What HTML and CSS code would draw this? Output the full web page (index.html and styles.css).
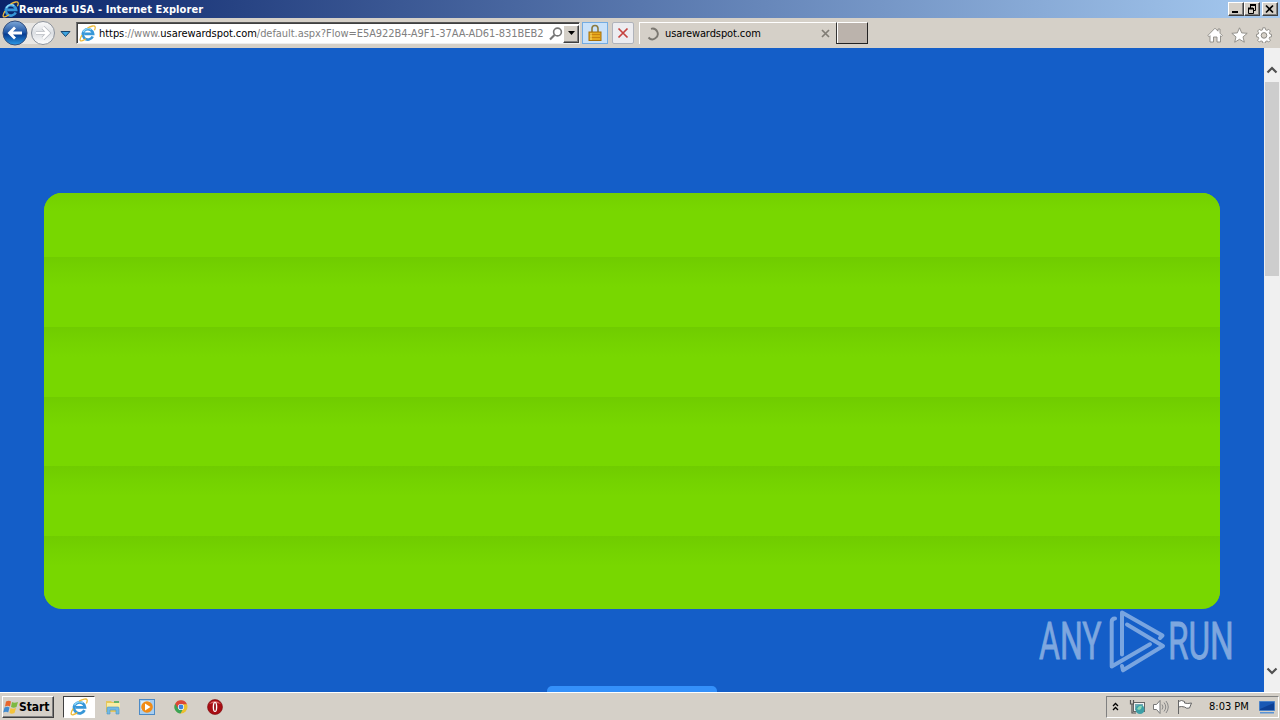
FILE: index.html
```html
<!DOCTYPE html>
<html lang="en">
<head>
    <meta charset="UTF-8">
    <title>Rewards USA</title>
    <link rel="stylesheet" href="styles.css">
</head>
<body>
    <svg class="defs" width="0" height="0">
        <defs>
            <linearGradient id="blue" x1="0" y1="0" x2="0" y2="1">
                <stop offset="0" stop-color="#7fa9d8"/>
                <stop offset=".48" stop-color="#1d54a4"/>
                <stop offset=".55" stop-color="#073c91"/>
                <stop offset="1" stop-color="#2b9be8"/>
            </linearGradient>
            <linearGradient id="grey" x1="0" y1="0" x2="0" y2="1">
                <stop offset="0" stop-color="#fbfbfb"/>
                <stop offset=".5" stop-color="#dcdfe3"/>
                <stop offset="1" stop-color="#ffffff"/>
            </linearGradient>
            <symbol id="ie" viewBox="0 0 16 16">
                <path d="M12.900 10.800A4.900 4.900 0 1 1 13.300 8.300H5" fill="none" stroke="#3797d8" stroke-width="2.500"/>
                <path d="M4 6.500A5 5 0 0 1 11.500 4.400" fill="none" stroke="#8cd7f8" stroke-width="1.300"/>
                <path d="M2.800 9.500C.6 13 .4 15.300 2.600 14.900C4 14.600 5.500 13.700 6.500 13M8 2.800C11.500.8 14.800.2 15.200 1.700C15.400 2.700 15 4 14.500 4.900" fill="none" stroke="#edbb3c" stroke-width="1.200"/>
            </symbol>
        </defs>
    </svg>

    <div class="titlebar">
        <svg class="title-icon" width="17" height="17"><use href="#ie"/></svg>
        <span class="title">Rewards USA - Internet Explorer</span>
        <div class="window-buttons">
            <span class="win-btn"><svg width="14" height="12"><path d="M3 9h6" stroke="#000" stroke-width="2"/></svg></span>
            <span class="win-btn"><svg width="14" height="12"><path d="M5 2h6M3 5.500h5" stroke="#000" stroke-width="2"/><path d="M5.500 2v3M10.500 2v5.500H8M3.500 5v5.500h5V5" fill="none" stroke="#000"/></svg></span>
            <span class="win-btn close"><svg width="14" height="12"><path d="M3 2.500l7 7M10 2.500l-7 7" stroke="#000" stroke-width="1.700"/></svg></span>
        </div>
    </div>

    <div class="toolbar">
        <svg class="nav" width="76" height="30" viewBox="0 0 76 30">
            <path d="M15 5h28v21H15z" fill="#e9e7e4"/>
            <circle cx="15" cy="15" r="12" fill="url(#blue)" stroke="#344f7d"/>
            <path d="M22 15H10M15 9.500L9.500 15l5.500 5.500" fill="none" stroke="#fff" stroke-width="2.800"/>
            <circle cx="43" cy="15" r="11.500" fill="url(#grey)" stroke="#8c929b"/>
            <path d="M36 15h12M43 9.500l5.500 5.500-5.500 5.500" fill="none" stroke="#b5b9bf" stroke-width="4"/>
            <path d="M36 15h12M43 9.500l5.500 5.500-5.500 5.500" fill="none" stroke="#fff" stroke-width="2.600"/>
            <path d="M61 13.500h9L65.500 18.500z" fill="#3da4df" stroke="#17456d"/>
        </svg>
        <div class="address">
            <svg class="page-icon" width="17" height="17"><use href="#ie"/></svg>
            <span class="url"><b>https</b>://www.<b>usarewardspot.com</b>/default.aspx?Flow=E5A922B4-A9F1-37AA-AD61-831BEB2</span>
            <svg class="search" width="14" height="14"><circle cx="8.500" cy="5" r="3.900" fill="none" stroke="#777" stroke-width="1.600"/><path d="M5.500 8L1 12.500" stroke="#777" stroke-width="2.200"/></svg>
            <span class="drop"><svg width="9" height="5"><path d="M1 0h7L4.500 4z"/></svg></span>
        </div>
        <div class="lock">
            <svg width="14" height="18"><path d="M4 9V4.500a3 3 0 0 1 6 0V9" fill="none" stroke="#8b7a3e" stroke-width="1.600"/><rect x="1" y="8" width="12" height="8.500" fill="#e5a81c" stroke="#a66f09"/><path d="M2 10.500h10M2 13.500h10" stroke="#c98310"/><path d="M3 9v7" stroke="#f9df71"/></svg>
        </div>
        <div class="stop">
            <svg width="12" height="12"><path d="M1.500 1.500l9 9M10.500 1.500l-9 9" stroke="#c5423f" stroke-width="1.700"/></svg>
        </div>
        <div class="tab">
            <svg width="14" height="14"><path d="M5 1.800A5.300 5.300 0 1 1 2.500 10.500" fill="none" stroke="#7b7871" stroke-width="1.900"/></svg>
            <span class="tab-name">usarewardspot.com</span>
            <svg class="tab-close" width="9" height="9"><path d="M1 1l7 7M8 1L1 8" stroke="#817d75" stroke-width="1.700"/></svg>
        </div>
        <div class="new-tab"></div>
        <div class="tools">
            <svg width="16" height="16"><path d="M.8 8.500L8 1.200l3 3V2h2v4.200l2.300 2.300-1 1-.8-.8V15H10v-5H6.500v5H3V8.700l-.9.900z" fill="#fff" stroke="#8b8983" stroke-width=".9"/></svg>
            <svg width="17" height="16"><path d="M8.500.8l2.200 5.100 5.500.4-4.200 3.600 1.300 5.300-4.800-2.900-4.800 2.900L5 9.900.8 6.300l5.500-.4z" fill="#fff" stroke="#8b8983" stroke-width=".9"/></svg>
            <svg width="16" height="16"><path d="M6.800.8h2.400l.4 2 1.400.6 1.700-1.100 1.700 1.700-1.100 1.700.6 1.400 1.600.3v2.400l-1.800.3-.5 1.400 1.200 1.800-1.700 1.700-1.700-1.100-1.400.6-.4 1.600H6.800l-.3-1.700-1.500-.5-1.700 1.100L1.600 13.300l1.100-1.800-.5-1.400-1.700-.3V7.400l1.700-.3.500-1.400L1.600 4l1.700-1.700L5 3.400l1.500-.6z" fill="#fff" stroke="#8b8983" stroke-width=".9"/><circle cx="8" cy="8.400" r="2.800" fill="#d6d1c8" stroke="#8b8983"/></svg>
        </div>
    </div>

    <div class="viewport">
        <div class="page">
            <div class="panel">
                <div class="row"></div>
                <div class="row"></div>
                <div class="row"></div>
                <div class="row"></div>
                <div class="row"></div>
                <div class="row"></div>
            </div>
            <div class="next-button"></div>
            <svg class="watermark" width="200" height="66" viewBox="0 0 200 66">
                <text transform="translate(3 50) scale(.617 1)">ANY</text>
                <g fill="none" stroke-width="4" stroke-linejoin="round" stroke-linecap="round">
                    <path d="M79 9.500q-3.300 0-3.300 3.500v44.500l38.300-22.200"/>
                    <path d="M86 45.500V3.500l40.500 23-2.500 2.500"/>
                    <path d="M91 15.500L127 37 87 61.300l-1-4.300"/>
                </g>
                <text transform="translate(132 50) scale(.64 1)">RUN</text>
            </svg>
        </div>
        <div class="scrollbar">
            <svg width="16" height="34"><path d="M3.500 24.500L8 20l4.500 4.500" fill="none" stroke="#505050" stroke-width="2.200"/></svg>
            <div class="thumb"></div>
            <svg class="down" width="16" height="34"><path d="M3.500 10.500L8 15 12.500 10.500" fill="none" stroke="#505050" stroke-width="2.200"/></svg>
        </div>
    </div>

    <div class="taskbar">
        <div class="start">
            <svg width="16" height="16"><path d="M3 2.500q3-1.500 5 0L7 7.500q-2-1.500-5 0z" fill="#e7652c"/><path d="M9 3q2 1.500 6 0l-1.500 5q-3 1.500-5.500 0z" fill="#7db942"/><path d="M1.500 8.500q3-1.500 5 0l-1.300 5q-2-1.500-5 0z" fill="#418bd0"/><path d="M7.500 9q2 1.500 5.500 0l-1.500 5q-3 1.500-5 0z" fill="#f4c33a"/></svg>
            <span>Start</span>
        </div>
        <div class="task active"><svg width="18" height="18"><use href="#ie"/></svg></div>
        <div class="task">
            <svg width="17" height="16"><path d="M1 2h5l1 1h7v10H1z" fill="#e5c65b"/><path d="M2 4h13v6H2z" fill="#f9eda4"/><path d="M9 2h5v2H9z" fill="#64b36a"/><path d="M2 15V9q0-1 1-1h10q1 0 1 1v6h-3v-4H5v4z" fill="#72b9e4" stroke="#4a94c5" stroke-width=".6"/></svg>
        </div>
        <div class="task">
            <svg width="16" height="16"><rect x=".5" y=".5" width="15" height="15" fill="#a8cef0" stroke="#4c8ac6"/><rect x="2" y="2" width="9" height="9" fill="#d8ebfa"/><circle cx="8" cy="8" r="5.800" fill="#f18b16"/><path d="M6 4.500L11.500 8 6 11.500z" fill="#fff"/></svg>
        </div>
        <div class="task">
            <svg width="14" height="14"><circle cx="7" cy="7" r="6.500" fill="#ecc02f"/><path d="M7 7L1.200 3.700A6.500 6.500 0 0 0 6.500 13.500l3-5.200z" fill="#3aa357"/><path d="M1.200 3.700A6.500 6.500 0 0 1 12.900 4.300H7L4.500 9z" fill="#dc4738"/><circle cx="7" cy="7" r="3.100" fill="#fff"/><circle cx="7" cy="7" r="2.400" fill="#3e83dc"/></svg>
        </div>
        <div class="task">
            <svg width="16" height="16"><circle cx="8" cy="8" r="7.500" fill="#a80d13" stroke="#7b0b0f" stroke-width=".6"/><path d="M2 5q6-6 12 0-6-2-12 0" fill="#db6a6b"/><ellipse cx="8" cy="8" rx="2.300" ry="5" fill="#fff"/><ellipse cx="8" cy="8" rx=".9" ry="4" fill="#8f0a10"/></svg>
        </div>
        <div class="tray">
            <svg class="chevrons" width="7" height="9"><path d="M1 4l2.500-2.500L6 4M1 8l2.500-2.500L6 8" fill="none" stroke="#000" stroke-width="1.300"/></svg>
            <svg class="network" width="17" height="16"><rect x="4.500" y="3.500" width="11" height="9" fill="#f4f4f4" stroke="#666"/><path d="M6 5h8v6H6z" fill="#73aab3"/><path d="M1.500 1v4h3V1M3 5v9h4" fill="none" stroke="#555" stroke-width="1.200"/><circle cx="11" cy="10.500" r="4.500" fill="#3d9fa6"/><path d="M8 10q2-4 5-3l-1 3-2 1z" fill="#8dd7b3"/></svg>
            <svg class="sound" width="17" height="16"><path d="M1.500 5.500h3l3.500-4v13l-3.500-4h-3z" fill="#fff" stroke="#777"/><path d="M10 5.500q2 2.500 0 5M12 3.500q3.500 4.500 0 9M14 2q4.500 6 0 12" fill="none" stroke="#888"/></svg>
            <svg class="flag" width="17" height="16"><path d="M2.500 1v14M2.500 2.500q3-2 6 0v1.500q3 1 7 0l-2 5q-3 1-5-1-3-1-6 0" fill="#fff" stroke="#666"/></svg>
            <span class="clock">8:03 PM</span>
            <svg class="desktop" width="16" height="14"><path d="M.5 1.500h15v9H.5z" fill="#1958b4" stroke="#4a81c7"/><path d="M1 9l14-6v7H1z" fill="#0d4095"/><path d="M1 12h14v1.500H1z" fill="#5993d5"/></svg>
        </div>
    </div>
</body>
</html>
```

FILE: styles.css
```css
* {
    box-sizing: border-box;
}

body {
    margin: 0;
    width: 1280px;
    height: 720px;
    display: flex;
    flex-direction: column;
    overflow: hidden;
    background: #d5d0c8;
    color: #000;
    font-family: "DejaVu Sans Condensed", "DejaVu Sans", sans-serif;
    font-size: 11px;
}

svg {
    display: block;
    flex: none;
}

.defs {
    position: absolute;
}

.titlebar {
    height: 18px;
    display: flex;
    align-items: center;
    padding: 0 2px;
    background: linear-gradient(to right, #0a246a, #a6caf0);
}

.title {
    color: #fff;
    font-weight: bold;
    letter-spacing: 0.1px;
    white-space: nowrap;
}

.window-buttons {
    display: flex;
    margin-left: auto;
}

.win-btn {
    width: 16px;
    height: 14px;
    background: #d5d0c8;
    border: 1px solid;
    border-color: #fff #404040 #404040 #fff;
    box-shadow: inset -1px -1px #808080;
}

.win-btn.close {
    margin-left: 2px;
}

.toolbar {
    height: 30px;
    display: flex;
    align-items: center;
    background: #d5d0c8;
}

.address {
    width: 504px;
    height: 22px;
    display: flex;
    align-items: center;
    padding: 1px 0 0 2px;
    background: #fff;
    border: 1px solid;
    border-color: #555 #eee #eee #777;
    box-shadow: inset 1px 1px #404040;
}

.url {
    width: 451px;
    margin-left: 3px;
    color: #808080;
    letter-spacing: -0.05px;
    white-space: nowrap;
}

.url b {
    color: #000;
    font-weight: normal;
}

.drop {
    width: 16px;
    height: 18px;
    display: flex;
    flex: none;
    align-items: center;
    justify-content: center;
    background: #d5d0c8;
    border: 1px solid;
    border-color: #fff #404040 #404040 #fff;
    box-shadow: inset -1px -1px #808080;
}

.lock,
.stop {
    display: flex;
    align-items: center;
    justify-content: center;
    height: 22px;
    border: 1px solid #74ace2;
    background: #c9e1f9;
}

.lock {
    width: 26px;
    margin-left: 2px;
}

.stop {
    width: 22px;
    margin-left: 4px;
    border-color: #b0b3bb;
    border-radius: 2px;
    background: #ececf0;
}

.tab {
    width: 198px;
    height: 22px;
    margin-left: 5px;
    display: flex;
    align-items: center;
    padding: 0 7px 0 6px;
    border-top: 1px solid #fff;
    border-left: 1px solid #fff;
}

.tab-name {
    margin-left: 5px;
    letter-spacing: -0.1px;
    white-space: nowrap;
}

.tab-close {
    margin-left: auto;
}

.new-tab {
    width: 32px;
    height: 22px;
    margin-left: -1px;
    background: #bbb3ac;
    border: 1px solid;
    border-color: #fff #222 #222 #333;
    box-shadow: inset 1px 0 #fff;
}

.tools {
    display: flex;
    gap: 8px;
    margin: 3px 8px 0 auto;
}

.viewport {
    height: 644px;
    display: flex;
}

.page {
    position: relative;
    width: 1264px;
    padding: 145px 44px 0;
    background: #145ec8;
    overflow: hidden;
}

.panel {
    height: 416px;
    border-radius: 18px;
    overflow: hidden;
    background: #78d700;
}

.row {
    height: 69.8px;
    background: linear-gradient(#70cc00, #74d200 14px, #78d700 30px);
}

.row:first-child {
    height: 64px;
    background: linear-gradient(#74d000, #78d700 18px);
}

.next-button {
    width: 170px;
    height: 40px;
    margin: 77px auto 0;
    border-radius: 5px;
    background: #3490fa;
}

.watermark {
    position: absolute;
    left: 1036px;
    top: 561px;
    opacity: 0.65;
}

.watermark text {
    fill: #b8cfec;
    stroke: #b8cfec;
    stroke-width: 0.8px;
    font-family: Roboto, sans-serif;
    font-size: 52px;
}

.watermark g {
    stroke: #b0cbed;
}

.scrollbar {
    width: 16px;
    display: flex;
    flex-direction: column;
    background: #f0f0f0;
}

.thumb {
    width: 14px;
    height: 194px;
    margin-left: 1px;
    background: #cdcdcd;
}

.down {
    margin-top: auto;
}

.taskbar {
    height: 28px;
    display: flex;
    align-items: center;
    padding: 0 1px 0 2px;
    background: #d5d0c8;
    border-top: 1px solid #fff;
}

.start {
    width: 52px;
    height: 22px;
    display: flex;
    align-items: center;
    margin-right: 9px;
    border: 1px solid;
    border-color: #fff #404040 #404040 #fff;
    box-shadow: inset -1px -1px #808080;
    font-size: 12px;
    font-weight: bold;
    letter-spacing: -0.1px;
}

.task {
    width: 34px;
    height: 22px;
    display: flex;
    align-items: center;
    justify-content: center;
}

.task.active {
    width: 32px;
    margin-right: 1px;
    background: #fff;
    border: 1px solid;
    border-color: #404040 #fff #fff #404040;
}

.tray {
    width: 173px;
    height: 22px;
    display: flex;
    align-items: center;
    margin-left: auto;
    padding-left: 5px;
    border: 1px solid;
    border-color: #808080 #fff #fff #808080;
}

.network {
    margin-left: 10px;
}

.sound {
    margin-left: 6px;
}

.flag {
    margin-left: 7px;
}

.clock {
    width: 50px;
    margin-left: 16px;
    white-space: nowrap;
}
```
